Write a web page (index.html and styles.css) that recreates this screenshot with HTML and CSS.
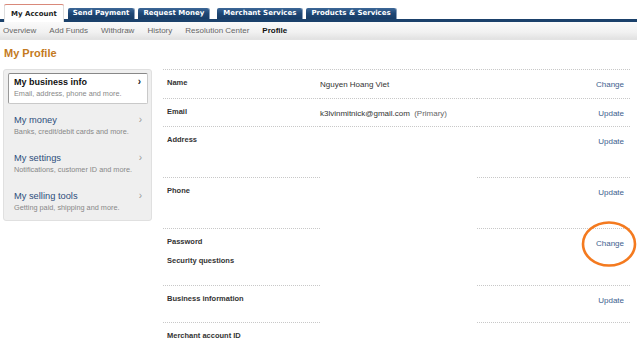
FILE: index.html
```html
<!DOCTYPE html>
<html>
<head>
<meta charset="utf-8">
<link rel="stylesheet" href="styles.css">
</head>
<body>
<div class="tabs">
  <a class="tab active">My Account</a>
  <a class="tab">Send Payment</a>
  <a class="tab">Request Money</a>
  <a class="tab">Merchant Services</a>
  <a class="tab">Products &amp; Services</a>
</div>
<div class="subnav">
  <a>Overview</a>
  <a>Add Funds</a>
  <a>Withdraw</a>
  <a>History</a>
  <a>Resolution Center</a>
  <a class="cur">Profile</a>
</div>
<h1 class="title">My Profile</h1>
<div class="main">
  <div class="side">
    <div class="item active">
      <div class="ititle">My business info<span class="chev">›</span></div>
      <div class="isub">Email, address, phone and more.</div>
    </div>
    <div class="item">
      <div class="ititle">My money<span class="chev">›</span></div>
      <div class="isub">Banks, credit/debit cards and more.</div>
    </div>
    <div class="item">
      <div class="ititle">My settings<span class="chev">›</span></div>
      <div class="isub">Notifications, customer ID and more.</div>
    </div>
    <div class="item">
      <div class="ititle">My selling tools<span class="chev">›</span></div>
      <div class="isub">Getting paid, shipping and more.</div>
    </div>
  </div>
  <div class="info">
    <div class="lbl h29">Name</div><div class="val">Nguyen Hoang Viet</div><div class="act">Change</div>
    <div class="lbl h28">Email</div><div class="val">k3lvinmitnick@gmail.com <span class="prim">(Primary)</span></div><div class="act">Update</div>
    <div class="lbl h51">Address</div><div class="val"></div><div class="act">Update</div>
    <div class="lbl h51">Phone</div><div class="val nb"></div><div class="act">Update</div>
    <div class="lbl h57">Password<div class="sq">Security questions</div></div><div class="val nb"></div><div class="act">Change</div>
    <div class="lbl h37">Business information</div><div class="val nb"></div><div class="act">Update</div>
    <div class="lbl h26">Merchant account ID</div><div class="val nb"></div><div class="act"></div>
  </div>
</div>
<svg class="ring" width="58" height="48" viewBox="0 0 58 48"><ellipse cx="29" cy="24" rx="26" ry="21.5" fill="none" stroke="#f47a1f" stroke-width="2.6"/></svg>
</body>
</html>
```
FILE: styles.css
```css
html, body { margin: 0; padding: 0; background: #fff; }
body { font-family: "Liberation Sans", Arial, sans-serif; color: #333; width: 640px; height: 348px; overflow: hidden; position: relative; }

.tabs { display: flex; align-items: flex-end; height: 15px; padding: 4px 0 0 4px; border-bottom: 3px solid #1b416b; margin-right: 3px; }
.tab { font-family: "DejaVu Sans", Verdana, sans-serif; font-size: 7px; font-weight: bold; color: #fff; white-space: nowrap; height: 11px; line-height: 11px; padding: 0 5px; margin-right: 4px; background: linear-gradient(#3d6898, #1e4775 50%, #173c66); border-top-left-radius: 2px; border-top-right-radius: 2px; box-shadow: 1px 0 0 #8aa0bb; }
.tab:nth-child(4) { margin-left: 4px; padding: 0 6px; }
.tab.active { background: #fff; color: #222; height: 18px; line-height: 18px; margin-bottom: -3px; border-top: 1px solid #d9897a; box-sizing: border-box; padding: 0 7px; box-shadow: inset 1px 0 0 #ddd, inset -1px 0 0 #ddd; }

.subnav { display: flex; height: 17px; align-items: center; padding-left: 3px; background: linear-gradient(#fafafa, #f1f1f1 60%, #e2e2e2); border-bottom: 1px solid #e3e3e3; margin-right: 3px; }
.subnav a { font-size: 8px; color: #666; margin-right: 13px; white-space: nowrap; }
.subnav a.cur { font-weight: bold; color: #111; }

.title { margin: 0; font-size: 11px; color: #c47a22; font-weight: bold; padding: 7px 0 0 4px; height: 20px; box-sizing: border-box; }

.main { display: flex; padding: 9px 0 0 3px; align-items: flex-start; }
.side { width: 149px; box-sizing: border-box; background: #efefef; border: 1px solid #e0e0e0; border-radius: 3px; padding: 3px 3px 2px 4px; height: 152px; }
.item { height: 31px; box-sizing: border-box; padding: 4px 0 0 6px; margin-bottom: 7px; }
.item.active { background: #fff; border: 1px solid #c9c9c9; border-top-color: #888; border-left-color: #999; border-radius: 2px; padding: 3px 0 0 5px; }
.ititle { font-size: 9.3px; line-height: 11px; color: #2d4e7c; position: relative; }
.item.active .ititle { font-weight: bold; color: #111; font-size: 9px; }
.chev { position: absolute; right: 6px; top: -1px; font-size: 10px; color: #999; }
.item.active .chev { color: #222; font-weight: bold; }
.isub { font-size: 7.3px; line-height: 12px; color: #888; }

.info { display: grid; grid-template-columns: 157px 157px 153px; margin-left: 11px; }
.info > div { border-top: 1px dotted #c8c8c8; box-sizing: border-box; font-size: 8px; }
.info > div.nb { border-top-color: transparent; }
.lbl { font-weight: bold; color: #333; padding: 8px 0 0 4px; font-size: 7.5px !important; }
.val { padding: 10px 0 0 0; color: #333; }
.prim { color: #666; margin-left: 2px; }
.act { text-align: right; padding: 10px 6px 0 0; color: #40618e; }
.sq { margin-top: 10px; }
.h29 { height: 29px; } .h28 { height: 28px; } .h51 { height: 51px; } .h57 { height: 57px; } .h37 { height: 37px; } .h26 { height: 26px; }

.ring { position: absolute; left: 580px; top: 220px; }
```
